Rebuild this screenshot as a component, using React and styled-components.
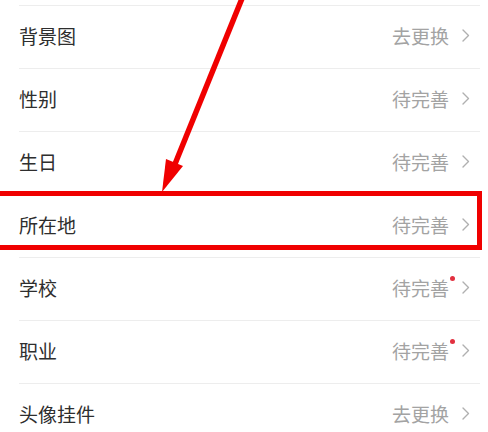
import React from "react";
import styled, { createGlobalStyle } from "styled-components";

const rows = [
  { label: "背景图", value: "去更换" },
  { label: "性别", value: "待完善" },
  { label: "生日", value: "待完善" },
  { label: "所在地", value: "待完善" },
  { label: "学校", value: "待完善", dot: true },
  { label: "职业", value: "待完善", dot: true },
  { label: "头像挂件", value: "去更换" },
];

const App = () => {
  return (
    <Page>
      <GlobalStyle />
      <List>
        {rows.map((row) => (
          <Row key={row.label}>
            <Inner>
              <Label>{row.label}</Label>
              <Right>
                <Value $dot={row.dot}>{row.value}</Value>
                <Chevron width="8" height="13" viewBox="0 0 8 13">
                  <polyline
                    points="1,1 6.5,6.5 1,12"
                    fill="none"
                    stroke="#b0b0b0"
                    strokeWidth="1.4"
                    strokeLinecap="round"
                    strokeLinejoin="round"
                  />
                </Chevron>
              </Right>
            </Inner>
          </Row>
        ))}
      </List>
      <Highlight />
      <Arrow width="488" height="432" viewBox="0 0 488 432">
        <line
          x1="243"
          y1="-4"
          x2="175"
          y2="164"
          stroke="#f00000"
          strokeWidth="5.5"
        />
        <polygon points="162,192 166,159 183,166" fill="#f00000" />
      </Arrow>
    </Page>
  );
};

export default App;

const GlobalStyle = createGlobalStyle`
  html, body {
    margin: 0;
    padding: 0;
    background: #fff;
  }
  body {
    font-family: "Noto Sans CJK SC", "Noto Sans", sans-serif;
  }
`;

const Page = styled.div`
  position: relative;
  width: 488px;
  height: 432px;
  overflow: hidden;
  background: #fff;
`;

const List = styled.ul`
  margin: 0;
  padding: 5px 0 0;
  list-style: none;
`;

const Row = styled.li`
  padding-left: 19px;
`;

const Inner = styled.div`
  box-sizing: border-box;
  display: flex;
  align-items: center;
  justify-content: space-between;
  height: 63px;
  border-top: 1px solid #ededed;
  padding: 0 10px 4px 0;
  margin-right: 8px;
`;

const Label = styled.span`
  font-size: 19px;
  color: #2e2e2e;
  line-height: 1;
`;

const Right = styled.div`
  display: flex;
  align-items: center;
  gap: 13px;
`;

const Value = styled.span`
  position: relative;
  font-size: 19px;
  color: #a3a3a3;
  line-height: 1;
  &::after {
    content: "";
    display: ${(p) => (p.$dot ? "block" : "none")};
    position: absolute;
    right: -6px;
    top: -2px;
    width: 5px;
    height: 5px;
    border-radius: 50%;
    background: #e2303f;
  }
`;

const Chevron = styled.svg`
  display: block;
`;

const Highlight = styled.div`
  position: absolute;
  left: -6px;
  top: 191px;
  width: 488px;
  height: 59px;
  box-sizing: border-box;
  border: 5px solid #f00000;
`;

const Arrow = styled.svg`
  position: absolute;
  left: 0;
  top: 0;
  pointer-events: none;
`;
